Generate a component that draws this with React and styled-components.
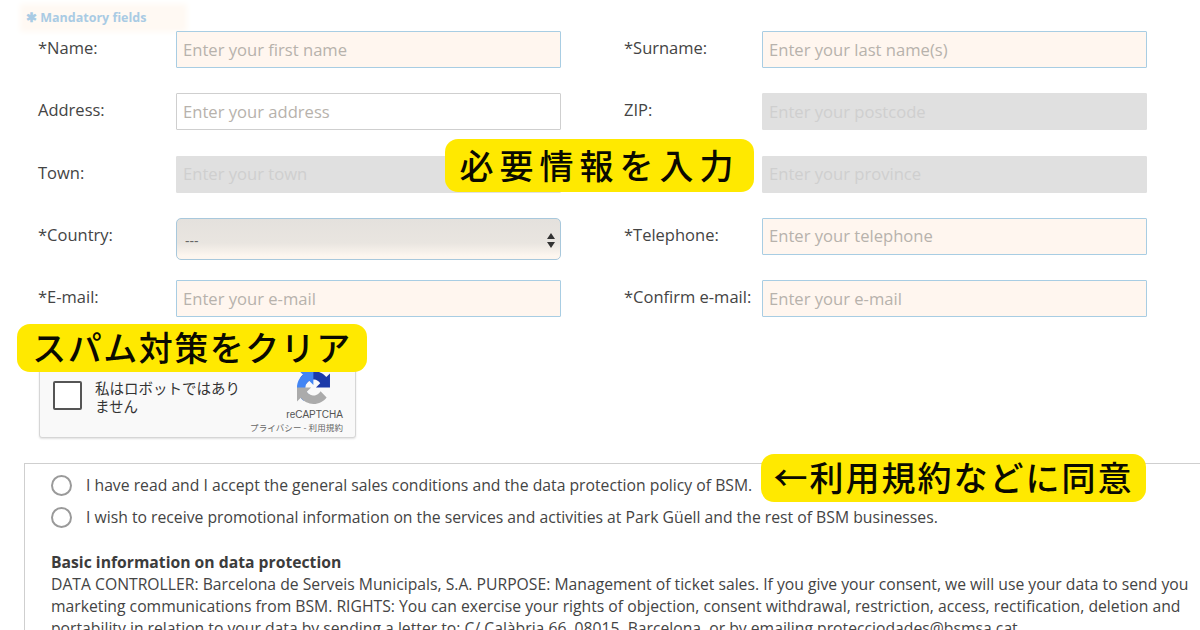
import React from 'react';
import styled, { createGlobalStyle } from 'styled-components';

const GlobalStyle = createGlobalStyle`
  html, body {
    margin: 0;
    background: #fff;
    font-family: 'Open Sans', 'Noto Sans', sans-serif;
    color: #444;
  }
`;

const Page = styled.div`
  position: relative;
  width: 1200px;
  height: 630px;
  overflow: hidden;
`;

const MandatoryNote = styled.div`
  height: 31px;
  box-sizing: border-box;
  padding: 10px 0 0 26px;
  font-size: 12.5px;
  line-height: 16px;
  font-weight: 700;
  color: #a9cbe4;

  span {
    display: inline-block;
    width: 155px;
    background: #fff9f3;
    box-shadow: 0 0 6px 6px #fff9f3;
  }
`;

const FormGrid = styled.div`
  display: grid;
  grid-template-columns: 138px 385px 138px 385px;
  grid-auto-rows: 37px;
  row-gap: 25.25px;
  padding-left: 38px;

  & > :nth-child(4n + 3),
  & > :nth-child(4n) {
    margin-left: 63px;
  }
`;

const Label = styled.label`
  font-size: 16.5px;
  line-height: 34px;
  color: #444;
  white-space: nowrap;
`;

const TextInput = styled.input`
  box-sizing: border-box;
  width: 385px;
  height: 37px;
  padding: 0 6px 1px;
  font-family: 'Open Sans', sans-serif;
  font-size: 16.6px;
  border-radius: 1px;
  outline: none;
  border: 1px solid ${p => (p.$required ? '#a8cde3' : '#cfcfcf')};
  background: ${p => (p.disabled ? '#e0e0e0' : p.$required ? '#fff6ef' : '#fff')};
  ${p => p.disabled && 'border-color: #e0e0e0;'}

  &::placeholder {
    color: ${p => (p.disabled ? '#cfcfcf' : '#b7b2ac')};
    opacity: 1;
  }
`;

const SelectWrap = styled.div`
  position: relative;
  width: 385px;
  height: 42px;
`;

const Select = styled.select`
  appearance: none;
  box-sizing: border-box;
  width: 100%;
  height: 100%;
  padding: 4px 8px 0;
  font-family: 'Open Sans', sans-serif;
  font-size: 14px;
  color: #666;
  border: 1.5px solid #a8c8dc;
  border-radius: 5px;
  background: linear-gradient(#e4e1dd 0%, #e9e5e0 60%, #fdf6ef 92%);
`;

const SelectArrows = styled.svg`
  position: absolute;
  right: 6px;
  top: 15px;
  width: 8px;
  height: 15px;
  pointer-events: none;
`;

const Captcha = styled.div`
  box-sizing: border-box;
  position: relative;
  display: flex;
  width: 317px;
  height: 79px;
  margin: 42px 0 0 39px;
  padding: 21px 0 0 13px;
  gap: 13px;
  background: #f9f9f9;
  border: 1px solid #d6d6d6;
  border-radius: 3px;
  box-shadow: 0 1px 2px rgba(0, 0, 0, 0.12);
`;

const CaptchaBox = styled.div`
  box-sizing: border-box;
  flex: none;
  width: 29px;
  height: 29px;
  background: #fff;
  border: 2px solid #555;
  border-radius: 2px;
`;

const CaptchaText = styled.div`
  width: 150px;
  margin-top: -2px;
  font-family: 'Noto Sans CJK JP', sans-serif;
  font-size: 14.5px;
  line-height: 18px;
  color: #333;
`;

const CaptchaBrand = styled.div`
  position: absolute;
  right: 12px;
  top: 8px;
  display: flex;
  flex-direction: column;
  align-items: flex-end;
`;

const CaptchaLogo = styled.svg`
  width: 33px;
  height: 33px;
  margin: 3px 13px 0 0;
`;

const CaptchaName = styled.div`
  margin: 5px 0 0 0;
  font-family: 'Liberation Sans', sans-serif;
  font-size: 10px;
  line-height: 12px;
  color: #555;
`;

const CaptchaLinks = styled.div`
  margin-top: 0;
  font-family: 'Noto Sans CJK JP', sans-serif;
  font-size: 8.5px;
  line-height: 12px;
  letter-spacing: 0.1px;
  color: #666;
  white-space: nowrap;
`;

const ConsentBox = styled.section`
  box-sizing: border-box;
  width: 1300px;
  height: 300px;
  margin: 25px 0 0 24px;
  padding: 5px 0 0 26px;
  border: 1px solid #cfcfcf;
`;

const ConsentRow = styled.div`
  display: flex;
  align-items: center;
  gap: 14px;
  height: 32px;
  font-size: 15.74px;
  color: #444;
  white-space: nowrap;
`;

const Radio = styled.span`
  box-sizing: border-box;
  flex: none;
  width: 21px;
  height: 21px;
  border: 2px solid #9a9a9a;
  border-radius: 50%;
  background: #fff;
`;

const Info = styled.div`
  width: 1145px;
  margin-top: 18px;
  font-size: 15.72px;
  line-height: 22px;
  color: #444;

  strong {
    display: block;
    font-weight: 700;
    color: #3c3c3c;
  }
`;

const Callout = styled.div`
  position: absolute;
  left: ${p => p.$x}px;
  top: ${p => p.$y}px;
  width: ${p => p.$w}px;
  height: ${p => p.$h}px;
  padding-bottom: ${p => p.$lift}px;
  box-sizing: border-box;
  display: flex;
  align-items: center;
  justify-content: center;
  background: #ffe900;
  border-radius: 13px;
  font-family: 'Noto Sans CJK JP', sans-serif;
  font-size: 34px;
  font-weight: 500;
  letter-spacing: ${p => p.$spacing}px;
  color: #0a0a00;
  white-space: nowrap;
`;

const fields = [
  [{ label: '*Name:', placeholder: 'Enter your first name', required: true }, { label: '*Surname:', placeholder: 'Enter your last name(s)', required: true }],
  [{ label: 'Address:', placeholder: 'Enter your address' }, { label: 'ZIP:', placeholder: 'Enter your postcode', disabled: true }],
  [{ label: 'Town:', placeholder: 'Enter your town', disabled: true }, { label: 'Province:', placeholder: 'Enter your province', disabled: true }],
  [{ label: '*Country:', select: true }, { label: '*Telephone:', placeholder: 'Enter your telephone', required: true }],
  [{ label: '*E-mail:', placeholder: 'Enter your e-mail', required: true }, { label: '*Confirm e-mail:', placeholder: 'Enter your e-mail', required: true }],
];

function Field({ field }) {
  return (
    <>
      <Label>{field.label}</Label>
      {field.select ? (
        <SelectWrap>
          <Select defaultValue="">
            <option value="">---</option>
          </Select>
          <SelectArrows viewBox="0 0 8 15">
            <path d="M4 0 L8 6 H0 Z M0 9 H8 L4 15 Z" fill="#333" />
          </SelectArrows>
        </SelectWrap>
      ) : (
        <TextInput
          placeholder={field.placeholder}
          disabled={field.disabled}
          $required={field.required}
        />
      )}
    </>
  );
}

export default function App() {
  return (
    <Page>
      <GlobalStyle />
      <MandatoryNote>
        <span>✱ Mandatory fields</span>
      </MandatoryNote>
      <FormGrid>
        {fields.flat().map(field => (
          <Field key={field.label} field={field} />
        ))}
      </FormGrid>

      <Captcha>
        <CaptchaBox />
        <CaptchaText>私はロボットではありません</CaptchaText>
        <CaptchaBrand>
          <CaptchaLogo viewBox="0 0 64 64">
            <path d="M64 31.955l-.033-1.37V4.687l-7.16 7.16C50.948 4.674 42.033.093 32.05.093c-10.4 0-19.622 4.96-25.458 12.64l11.736 11.86a15.55 15.55 0 0 1 4.754-5.334c2.05-1.6 4.952-2.906 8.968-2.906.485 0 .86.057 1.135.163 4.976.393 9.29 3.14 11.83 7.124l-8.307 8.307c10.522-.04 22.4-.066 27.29.005" fill="#1c3aa9" />
            <path d="M31.862.094l-1.37.033H4.594l7.16 7.16C4.58 13.147 0 22.06 0 32.046c0 10.4 4.96 19.622 12.64 25.458l11.86-11.736a15.55 15.55 0 0 1-5.334-4.754c-1.6-2.05-2.906-4.952-2.906-8.968 0-.485.057-.86.163-1.135.393-4.976 3.14-9.29 7.124-11.83l8.307 8.307c-.04-10.522-.066-22.4.005-27.29" fill="#4285f4" />
            <path d="M0 32l.033 1.37v25.9l7.16-7.16c5.86 7.173 14.774 11.754 24.76 11.754 10.4 0 19.622-4.96 25.458-12.64l-11.736-11.86a15.55 15.55 0 0 1-4.754 5.334c-2.05 1.6-4.952 2.906-8.968 2.906-.485 0-.86-.057-1.135-.163-4.976-.393-9.29-3.14-11.83-7.124l8.307-8.307c-10.522.04-22.4.066-27.29-.005" fill="#ababab" />
          </CaptchaLogo>
          <CaptchaName>reCAPTCHA</CaptchaName>
          <CaptchaLinks>プライバシー - 利用規約</CaptchaLinks>
        </CaptchaBrand>
      </Captcha>

      <ConsentBox>
        <ConsentRow>
          <Radio />
          I have read and I accept the general sales conditions and the data protection policy of BSM.
        </ConsentRow>
        <ConsentRow>
          <Radio />
          I wish to receive promotional information on the services and activities at Park Güell and the rest of BSM businesses.
        </ConsentRow>
        <Info>
          <strong>Basic information on data protection</strong>
          DATA CONTROLLER: Barcelona de Serveis Municipals, S.A. PURPOSE: Management of ticket sales. If you give your consent, we will use your data to send you marketing communications from BSM. RIGHTS: You can exercise your rights of objection, consent withdrawal, restriction, access, rectification, deletion and portability in relation to your data by sending a letter to: C/ Calàbria 66, 08015, Barcelona, or by emailing protecciodades@bsmsa.cat.
        </Info>
      </ConsentBox>

      <Callout $x={445} $y={139} $w={309} $h={53} $spacing={6} $lift={3}>必要情報を入力</Callout>
      <Callout $x={17} $y={324} $w={350} $h={48} $spacing={1.5} $lift={4}>スパム対策をクリア</Callout>
      <Callout $x={761} $y={454} $w={385} $h={48} $spacing={2} $lift={3}>←利用規約などに同意</Callout>
    </Page>
  );
}
